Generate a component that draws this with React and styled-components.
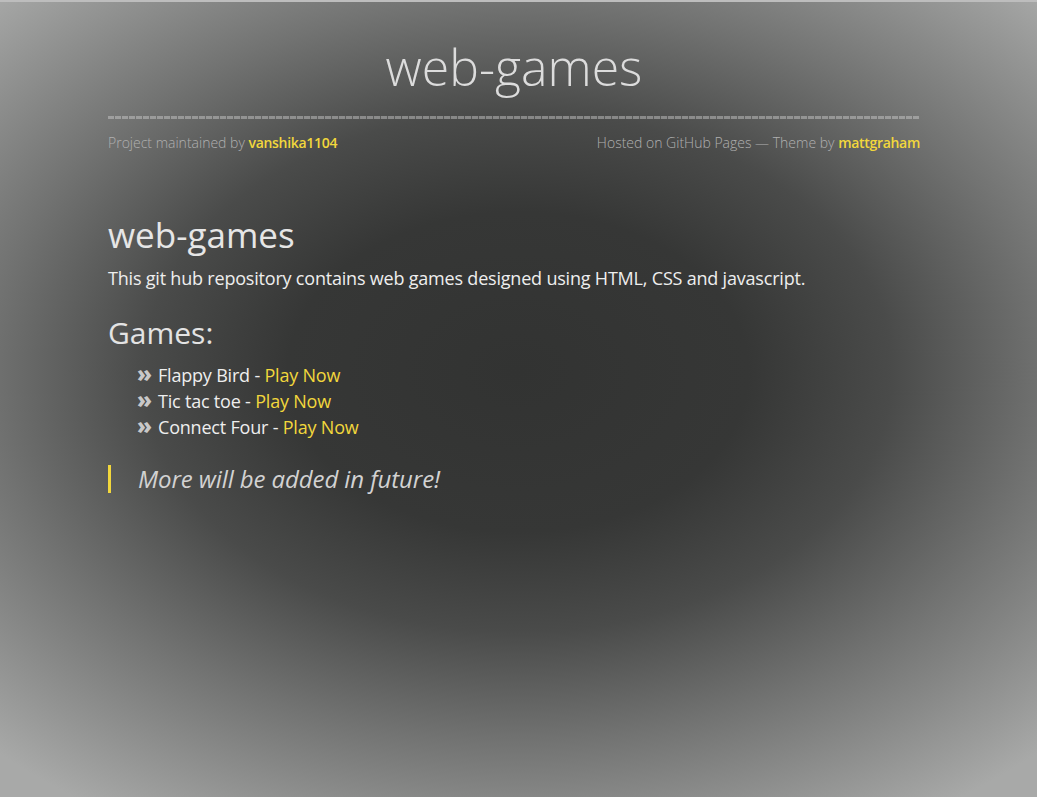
import styled, { createGlobalStyle } from 'styled-components';

const GlobalStyle = createGlobalStyle`
  html, body {
    margin: 0;
    padding: 0;
    height: 100%;
  }
  body {
    font-family: 'Open Sans', 'Liberation Sans', sans-serif;
    color: #eaeaea;
    background: #3a3a3a;
  }
`;

const Page = styled.div`
  min-height: 797px;
  box-sizing: border-box;
  border-top: 2px solid #bdbdbd;
  background: radial-gradient(
    ellipse 720px 500px at 518px 370px,
    #323332 0%,
    #363736 32%,
    #4a4b4a 52%,
    #727372 74%,
    #a8a9a8 105%
  );
`;

const Wrapper = styled.div`
  width: 812px;
  margin-left: 108px;
`;

const Header = styled.header`
  padding-top: 40px;
`;

const Title = styled.div`
  text-align: center;
  font-size: 50px;
  font-weight: 300;
  line-height: 1;
  color: #dcdcdc;
  padding-bottom: 24px;
`;

const Rule = styled.div`
  height: 3px;
  background: repeating-linear-gradient(
    90deg,
    rgba(210, 210, 210, 0.45) 0px,
    rgba(210, 210, 210, 0.45) 6px,
    rgba(120, 120, 120, 0.3) 6px,
    rgba(120, 120, 120, 0.3) 7px
  );
`;

const Meta = styled.div`
  display: flex;
  justify-content: space-between;
  font-size: 14px;
  font-weight: 300;
  color: #b0b0b0;
  margin-top: 14px;
`;

const Link = styled.a`
  color: #f2d73c;
  text-decoration: none;
  font-weight: ${(p) => (p.$bold ? 600 : 400)};
  letter-spacing: ${(p) => (p.$bold ? '-0.3px' : 'inherit')};
`;

const Main = styled.section`
  padding-top: 62px;
`;

const H1 = styled.h1`
  margin: 0;
  font-size: 35px;
  font-weight: 400;
  line-height: 1.2;
  color: #e6e6e6;
`;

const Para = styled.p`
  margin: 9px 0 0;
  font-size: 18px;
  line-height: 1.5;
  letter-spacing: -0.2px;
  color: #eeeeee;
`;

const H2 = styled.h2`
  margin: 23px 0 0;
  font-size: 30px;
  font-weight: 400;
  line-height: 1.2;
  color: #e3e3e3;
`;

const List = styled.ul`
  list-style: none;
  margin: 11px 0 0;
  padding: 0 0 0 29px;
`;

const Item = styled.li`
  display: flex;
  align-items: baseline;
  height: 26px;
  font-size: 18px;
  line-height: 26px;
  letter-spacing: -0.2px;
  color: #eeeeee;

  &::before {
    content: '»';
    font-weight: 800;
    font-size: 22px;
    line-height: 1;
    color: #c8c8c8;
    width: 21px;
    flex-shrink: 0;
  }
`;

const Quote = styled.blockquote`
  margin: 25px 0 0;
  padding: 0 0 0 27px;
  border-left: 3px solid #f2d73c;
  font-size: 24px;
  font-style: italic;
  line-height: 28px;
  letter-spacing: -0.1px;
  color: #d2d2d2;
`;

const games = ['Flappy Bird', 'Tic tac toe', 'Connect Four'];

export default function App() {
  return (
    <>
      <GlobalStyle />
      <Page>
        <Wrapper>
          <Header>
            <Title>web-games</Title>
            <Rule />
            <Meta>
              <span>
                Project maintained by <Link $bold href="#">vanshika1104</Link>
              </span>
              <span>
                Hosted on GitHub Pages — Theme by <Link $bold href="#">mattgraham</Link>
              </span>
            </Meta>
          </Header>
          <Main>
            <H1>web-games</H1>
            <Para>
              This git hub repository contains web games designed using HTML, CSS and javascript.
            </Para>
            <H2>Games:</H2>
            <List>
              {games.map((g) => (
                <Item key={g}>
                  <span>
                    {g} - <Link href="#">Play Now</Link>
                  </span>
                </Item>
              ))}
            </List>
            <Quote>More will be added in future!</Quote>
          </Main>
        </Wrapper>
      </Page>
    </>
  );
}
